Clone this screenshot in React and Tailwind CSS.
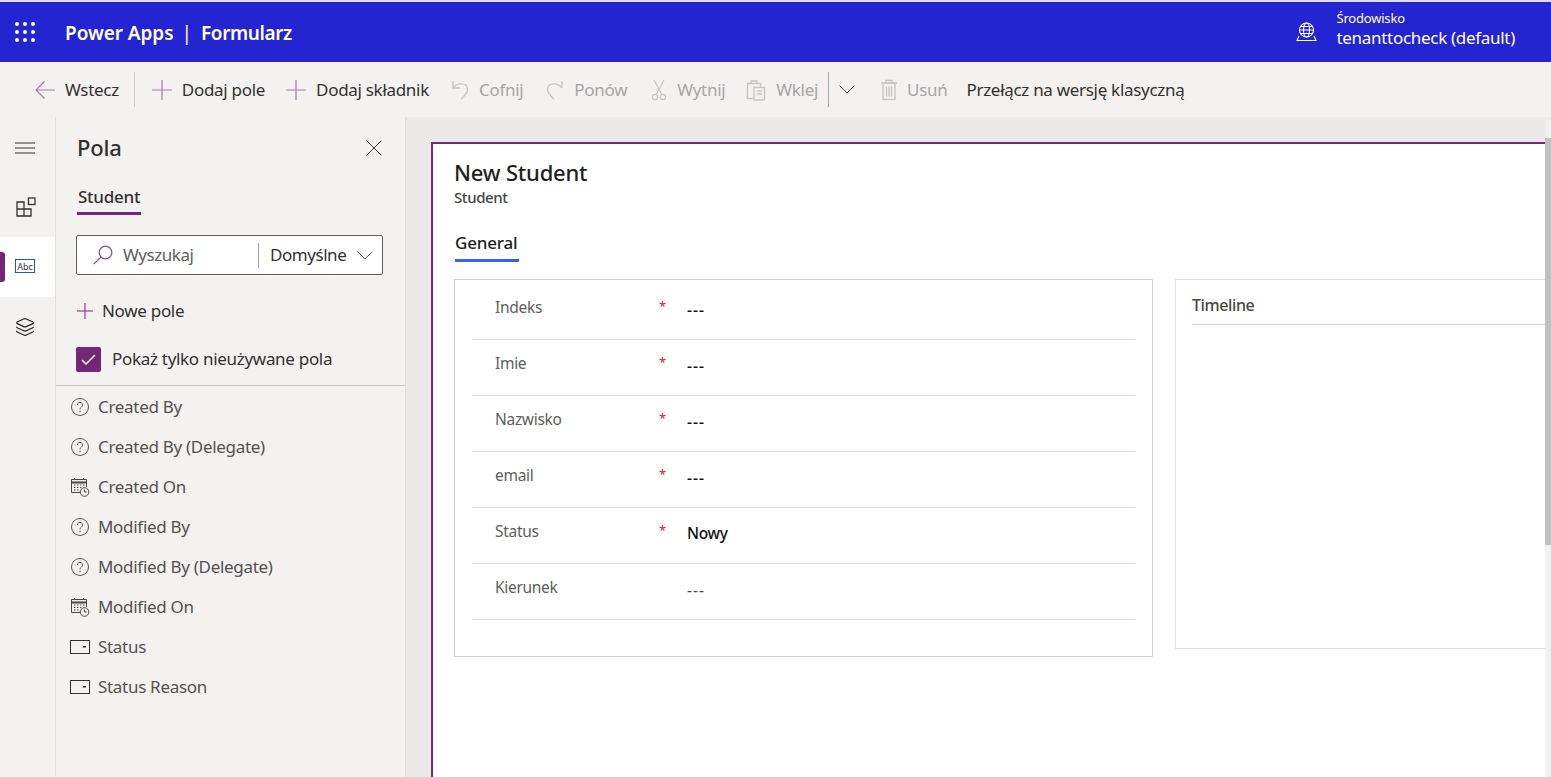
import React from 'react';
import { Layers } from 'lucide-react';

const font = { fontFamily: '"Noto Sans", sans-serif' };

const Waffle = () => (
  <svg width="20" height="20" viewBox="0 0 20 20" fill="white">
    {[1, 9, 17].map((cy) =>
      [2, 10, 18].map((cx) => <circle key={`${cx}-${cy}`} cx={cx} cy={cy + 1} r="2" />)
    )}
  </svg>
);

const Globe = () => (
  <svg width="21" height="20" viewBox="0 0 21 20" fill="none" stroke="white" strokeWidth="1.1">
    <circle cx="10.5" cy="8" r="7" />
    <ellipse cx="10.5" cy="8" rx="3" ry="7" />
    <path d="M3.5 8h14M4.5 4.5h12M4.5 11.5h12" />
    <path d="M3 14l-2 4.5h19l-2-4.5" />
  </svg>
);

const Hamburger = () => (
  <svg width="20" height="12" viewBox="0 0 20 12" stroke="#323130" strokeWidth="1">
    <path d="M0 1h20M0 6h20M0 11h20" />
  </svg>
);

const Components = () => (
  <svg width="20" height="20" viewBox="0 0 20 20" fill="none" stroke="#323130" strokeWidth="1.3">
    <path d="M1 5h7v7H1zM8 5v7M1 12v7h14v-7H1M8 12v7M8 12h7" />
    <rect x="12.5" y="1" width="6.5" height="6.5" />
  </svg>
);

const AbcIcon = () => (
  <svg width="20" height="14" viewBox="0 0 20 14">
    <rect x="0.5" y="0.5" width="19" height="13" fill="white" stroke="#2b579a" />
    <text x="10" y="10.5" textAnchor="middle" fontSize="9" fill="#323130" fontFamily="Noto Sans, sans-serif">Abc</text>
  </svg>
);

const QuestionIcon = () => (
  <svg width="20" height="20" viewBox="0 0 20 20" fill="none">
    <circle cx="10" cy="10" r="8.5" stroke="#605e5c" strokeWidth="1" />
    <path d="M7.4 8a2.6 2.6 0 1 1 4 2.1c-.9.6-1.4 1-1.4 2.2" stroke="#605e5c" strokeWidth="1" />
    <circle cx="10" cy="14.6" r=".8" fill="#605e5c" />
  </svg>
);

const CalendarClock = () => (
  <svg width="20" height="20" viewBox="0 0 20 20" fill="none" stroke="#484644" strokeWidth="1">
    <path d="M11 15.5H1.5v-13h15V10" />
    <path d="M1.5 5.5h15" strokeWidth="2" />
    <path d="M4.5 1v2M13.5 1v2" />
    <path d="M4 8h2M7 8h2M10 8h2M13 8h2M4 10.5h2M7 10.5h2M10 10.5h2M4 13h2M7 13h2" strokeDasharray="1 .6" />
    <circle cx="14.5" cy="15" r="4.3" fill="#f3f2f1" />
    <path d="M14.5 12.6V15h2.2" />
  </svg>
);

const OptionSet = () => (
  <svg width="20" height="14" viewBox="0 0 20 14" fill="none">
    <rect x="0.5" y="0.5" width="19" height="13" stroke="#323130" />
    <rect x="13" y="6" width="3" height="1.5" fill="#323130" />
  </svg>
);

const Glyph = ({ children, w = 20, h = 22, className = '', sw = 1.2 }) => (
  <svg width={w} height={h} viewBox={`0 0 ${w} ${h}`} fill="none" stroke="currentColor" strokeWidth={sw} className={className}>
    {children}
  </svg>
);

const BackIcon = () => <Glyph><path d="M20 11H1M9.5 2.5 1 11l8.5 8.5" /></Glyph>;
const PlusIcon = () => <Glyph><path d="M10 1v20M0 11h20" /></Glyph>;
const UndoIcon = () => <Glyph w={18} sw={1.4}><path d="M2 2v7h7" /><path d="M2.4 8.6C6 3.6 16 3.2 16.5 10c.3 4-3 6.6-6.5 10" /></Glyph>;
const RedoIcon = () => <Glyph w={18} sw={1.4}><path d="M16 2v7" /><path d="M15.6 8.6C12 3.6 2 3.2 1.5 10c-.3 4 3 6.6 6.5 10" /></Glyph>;
const CutIcon = () => (
  <Glyph w={16}>
    <path d="M3 1l7.5 14M13 1 5.5 15" />
    <circle cx="4" cy="18" r="2.6" />
    <circle cx="12" cy="18" r="2.6" />
  </Glyph>
);
const PasteIcon = () => (
  <Glyph sw={1.4}>
    <path d="M7 19.5H1.5V4.5h13V8" />
    <path d="M5 4.5V2h6v2.5" />
    <rect x="8" y="8.5" width="10.5" height="12.5" />
    <path d="M11 12h5M11 15h5" />
  </Glyph>
);
const TrashIcon = () => (
  <Glyph w={16} sw={1.4}>
    <path d="M0 4h16M5 4V1.5h6V4" />
    <rect x="2" y="4" width="12" height="16.5" />
    <path d="M5.5 7.5v10M8 7.5v10M10.5 7.5v10" />
  </Glyph>
);
const ChevronIcon = ({ className }) => (
  <svg width="16" height="9" viewBox="0 0 16 9" fill="none" stroke="currentColor" strokeWidth="1" className={className}>
    <path d="M.5.5 8 8 15.5.5" />
  </svg>
);

const CmdButton = ({ icon: Icon, label, disabled }) => (
  <div className={`flex items-center gap-[10px] ${disabled ? 'text-[#a6a6a6]' : 'text-[#323130]'}`}>
    <span className={disabled ? 'text-[#c8c6c4]' : 'text-[#a57bad]'}><Icon /></span>
    <span className="text-[17px] tracking-[-0.3px] whitespace-nowrap">{label}</span>
  </div>
);

const fields = [
  { label: 'Created By', icon: QuestionIcon },
  { label: 'Created By (Delegate)', icon: QuestionIcon },
  { label: 'Created On', icon: CalendarClock },
  { label: 'Modified By', icon: QuestionIcon },
  { label: 'Modified By (Delegate)', icon: QuestionIcon },
  { label: 'Modified On', icon: CalendarClock },
  { label: 'Status', icon: OptionSet },
  { label: 'Status Reason', icon: OptionSet },
];

const formRows = [
  { label: 'Indeks', required: true, value: '---' },
  { label: 'Imie', required: true, value: '---' },
  { label: 'Nazwisko', required: true, value: '---' },
  { label: 'email', required: true, value: '---' },
  { label: 'Status', required: true, value: 'Nowy' },
  { label: 'Kierunek', required: false, value: '---' },
];

export default function App() {
  return (
    <div style={font} className="relative h-[777px] w-[1551px] overflow-hidden flex flex-col bg-[#f3f2f1]">
      <div className="h-[2px] bg-[#dedcda]" />
      <header className="h-[60px] bg-[#2424d0] text-white flex items-center">
        <div className="w-[65px] pl-[15px] flex items-center"><Waffle /></div>
        <div className="pt-[2px] text-[19px] font-semibold flex items-center">
          <span className="tracking-[-0.05px]">Power Apps</span>
          <span className="ml-[8px] mr-[9px] font-normal">|</span>
          <span className="tracking-[-0.4px]">Formularz</span>
        </div>
        <div className="ml-auto flex items-center pr-[36px]">
          <Globe />
          <div className="ml-[19px] leading-none -mt-[7px]">
            <div className="text-[13px] tracking-[-0.2px] mb-[4px]">Środowisko</div>
            <div className="text-[17px] tracking-[-0.3px]">tenanttocheck (default)</div>
          </div>
        </div>
      </header>

      <div className="h-[55px] flex items-center pl-[35px] shrink-0">
        <CmdButton icon={BackIcon} label="Wstecz" />
        <div className="w-px h-[35px] bg-[#d2d0ce] ml-[15px] mr-[17px]" />
        <CmdButton icon={PlusIcon} label="Dodaj pole" />
        <div className="w-[21px]" />
        <CmdButton icon={PlusIcon} label="Dodaj składnik" />
        <div className="w-[22px]" />
        <CmdButton icon={UndoIcon} label="Cofnij" disabled />
        <div className="w-[23px]" />
        <CmdButton icon={RedoIcon} label="Ponów" disabled />
        <div className="w-[24px]" />
        <CmdButton icon={CutIcon} label="Wytnij" disabled />
        <div className="w-[21px]" />
        <CmdButton icon={PasteIcon} label="Wklej" disabled />
        <div className="w-px h-[35px] bg-[#a6a6a6] ml-[10px] mr-[10px]" />
        <ChevronIcon className="text-[#605e5c]" />
        <div className="w-[26px]" />
        <CmdButton icon={TrashIcon} label="Usuń" disabled />
        <span className="ml-[19px] text-[17px] tracking-[-0.3px] text-[#323130]">Przełącz na wersję klasyczną</span>
      </div>

      <div className="flex flex-1 min-h-0">
        <nav className="w-[56px] shrink-0 border-r border-[#e1dfdd] flex flex-col">
          <div className="h-[60px] flex items-center pl-[15px] pt-[2px]"><Hamburger /></div>
          <div className="h-[60px] flex items-center pl-[16px]"><Components /></div>
          <div className="relative h-[60px] w-[55px] bg-white rounded-r-[2px] flex items-center pl-[15px] pb-[2px]">
            <div className="absolute left-0 top-[15px] h-[30px] w-[5px] rounded-r-[3px] bg-[#742774]" />
            <AbcIcon />
          </div>
          <div className="h-[60px] flex items-center pl-[15px]">
            <Layers size={20} strokeWidth={1.4} className="text-[#201f1e]" />
          </div>
        </nav>

        <aside className="w-[350px] shrink-0 border-r border-[#e1dfdd] flex flex-col">
          <div className="pl-[20px] pr-[22px]">
            <div className="h-[61px] flex items-center justify-between pl-[1px]">
              <span className="text-[22px] font-medium text-[#323130] tracking-[-0.2px]">Pola</span>
              <svg width="16" height="16" viewBox="0 0 16 16" stroke="#323130" strokeWidth="1" className="mr-[1px]">
                <path d="M.5.5l15 15M15.5.5l-15 15" />
              </svg>
            </div>
            <div className="mt-[6px] ml-[1px] block w-[64px] border-b-[3px] border-[#742774] pb-[2px]">
              <span className="text-[17px] font-medium text-[#323130] tracking-[-0.25px] leading-[26px] block pl-[1px] whitespace-nowrap">Student</span>
            </div>
            <div className="mt-[20px] h-[40px] border border-[#605e5c] rounded-[2px] bg-white flex items-center">
              <div className="w-[181px] flex items-center pl-[16px] gap-[10px]">
                <svg width="20" height="20" viewBox="0 0 20 20" fill="none" stroke="#8a4f8a" strokeWidth="1.2">
                  <circle cx="12.5" cy="7.5" r="6.3" />
                  <path d="M8 12 .8 19.2" />
                </svg>
                <span className="text-[17px] text-[#605e5c] tracking-[-0.45px]">Wyszukaj</span>
              </div>
              <div className="w-px h-[25px] bg-[#a19f9d]" />
              <span className="ml-[11px] text-[17px] text-[#323130] tracking-[-0.45px]">Domyślne</span>
              <ChevronIcon className="ml-auto mr-[9px] text-[#605e5c]" />
            </div>
            <div className="mt-[21px] flex items-center gap-[9px] h-[30px]">
              <svg width="16" height="16" viewBox="0 0 16 16" stroke="#742774" strokeWidth="1" className="ml-[1px]">
                <path d="M8 0v16M0 8h16" />
              </svg>
              <span className="text-[17px] text-[#323130] tracking-[-0.3px]">Nowe pole</span>
            </div>
            <div className="mt-[20px] flex items-center gap-[11px] h-[26px]">
              <div className="w-[25px] h-[25px] rounded-[2px] bg-[#742774] flex items-center justify-center">
                <svg width="15" height="11" viewBox="0 0 15 11" fill="none" stroke="white" strokeWidth="1.5">
                  <path d="M1 6l4 4 9-9" />
                </svg>
              </div>
              <span className="text-[17px] text-[#323130] tracking-[-0.3px]">Pokaż tylko nieużywane pola</span>
            </div>
          </div>
          <div className="mt-[13px] h-px bg-[#c8c6c4]" />
          <ul className="pl-[13px] pt-[1px]">
            {fields.map(({ label, icon: Icon }) => (
              <li key={label} className="h-[40px] flex items-center gap-[8px]">
                <span className="w-[21px] flex justify-center"><Icon /></span>
                <span className="text-[17px] text-[#53514f] tracking-[-0.3px]">{label}</span>
              </li>
            ))}
          </ul>
        </aside>

        <main className="flex-1 min-w-0 bg-[#ebe9e7] pl-[25px] pt-[25px] overflow-hidden">
          <div className="w-[1200px] h-[700px] bg-white border-t-2 border-l-2 border-[#742774] pl-[21px]">
            <h1 className="mt-[13px] text-[22px] font-medium text-[#201f1e] tracking-[-0.2px] leading-[30px]">New Student</h1>
            <p className="text-[15px] font-medium text-[#484644] tracking-[-0.4px] leading-[20px]">Student</p>
            <div className="mt-[24px] ml-[1px] block w-[64px] border-b-[3px] border-[#3165f0] pb-[4px]">
              <span className="block text-[17px] font-medium text-[#201f1e] tracking-[-0.2px] leading-[24px]">General</span>
            </div>
            <div className="mt-[17px] flex items-start gap-[22px]">
              <section className="w-[699px] h-[378px] shrink-0 border border-[#d2d0ce] px-[17px] pt-[4px]">
                {formRows.map((row) => (
                  <div key={row.label} className="h-[56px] border-b border-[#e1dfdd] flex items-start">
                    <span className="w-[187px] pl-[23px] pt-[11px] text-[15.5px] text-[#605e5c] tracking-[-0.3px] leading-[24px]">{row.label}</span>
                    <span className="w-[28px] pt-[12px] text-[13px] text-[#e81123] leading-[20px]">{row.required ? '*' : ''}</span>
                    <span className={`text-[15.5px] leading-[24px] ${row.value === '---' ? 'pt-[14px] tracking-[1px]' : 'pt-[13px] tracking-[-0.3px]'} ${row.required ? 'text-[#111] font-medium' : 'text-[#484644]'}`}>{row.value}</span>
                  </div>
                ))}
              </section>
              <section className="w-[400px] h-[370px] border border-[#e1dfdd] pl-[16px]">
                <div className="h-[45px] border-b border-[#d2d0ce] pt-[13px] text-[16px] font-medium text-[#484644] tracking-[-0.4px] leading-[24px]">Timeline</div>
              </section>
            </div>
          </div>
        </main>
      </div>

      <div className="absolute right-0 top-[120px] bottom-0 w-[6px] bg-[#f1f1f1]">
        <div className="mt-[18px] h-[407px] bg-[#c1c1c1]" />
      </div>
    </div>
  );
}
